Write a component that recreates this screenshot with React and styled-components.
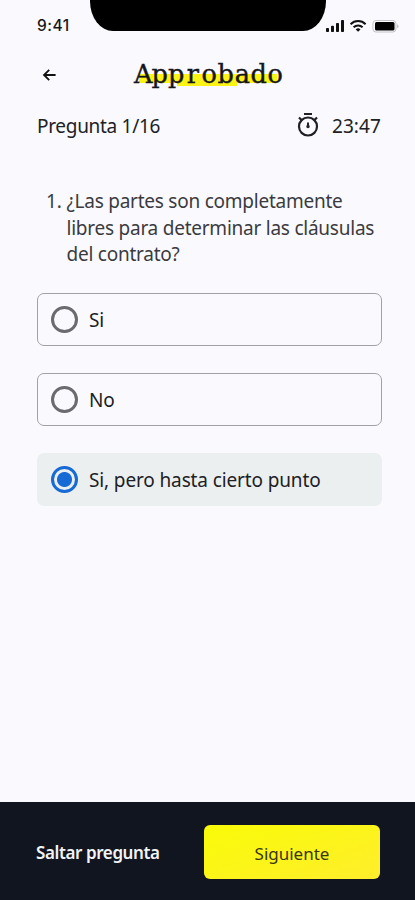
import React, { useState } from "react";
import styled, { createGlobalStyle } from "styled-components";

const GlobalStyle = createGlobalStyle`
  * {
    box-sizing: border-box;
  }

  body {
    margin: 0;
    background: #f9f9fe;
    font-family: "Noto Sans", "Open Sans", sans-serif;
    color: #202124;
  }

  button {
    border: 0;
    padding: 0;
    background: none;
    font: inherit;
    cursor: pointer;
  }
`;

const Screen = styled.div`
  display: flex;
  flex-direction: column;
  width: 100%;
  height: 100vh;
  min-height: 900px;
  background: #f9f9fe;
`;

const StatusBar = styled.div`
  display: grid;
  grid-template-columns: 90px 236px 1fr;
  height: 50px;
`;

const Clock = styled.div`
  padding: 17px 0 0 37px;
  font-family: Inter, sans-serif;
  font-size: 15.5px;
  font-weight: 500;
  line-height: 18px;
  letter-spacing: 0.5px;
  color: #17171b;
`;

const Notch = styled.div`
  height: 31px;
  background: #000;
  border-radius: 0 0 23px 23px / 0 0 30px 30px;
`;

const StatusIcons = styled.svg`
  width: 89px;
  height: 50px;
`;

const Header = styled.header`
  display: flex;
  align-items: center;
  height: 50px;
  padding-left: 42px;
`;

const BackButton = styled.button`
  width: 15px;
  height: 14px;
  margin-right: 78px;

  svg {
    display: block;
  }
`;

const Logo = styled.div`
  display: flex;
  padding-bottom: 3px;
  font-family: "DejaVu Serif", serif;
  font-size: 25.5px;
  line-height: 32px;
  color: #15151d;
  -webkit-text-stroke: 0.4px #15151d;
  background:
    linear-gradient(#fbf315, #fbf315) 42px 17px / 60px 11px no-repeat,
    linear-gradient(#fbf315, #fbf315) 4px 16px / 138px 9px no-repeat;
`;

// every letter takes the same width, like on a typewriter
const Letter = styled.span`
  display: flex;
  justify-content: center;
  width: 16.5px;
`;

const InfoRow = styled.div`
  display: flex;
  justify-content: space-between;
  align-items: center;
  height: 50px;
  padding: 2px 34px 0 37px;
`;

const Progress = styled.div`
  font-size: 19px;
  line-height: 26px;
  letter-spacing: -0.3px;
`;

const Timer = styled.div`
  display: flex;
  align-items: center;
  gap: 13px;
  font-size: 19px;
  line-height: 26px;
  letter-spacing: 0.1px;

  svg {
    margin-top: -3px;
  }
`;

const Question = styled.div`
  display: flex;
  gap: 5px;
  margin: 38px 0 25px;
  padding-left: 46px;
  font-size: 19px;
  line-height: 26.5px;
  letter-spacing: -0.24px;
  color: #3b3b3f;
`;

const Options = styled.div`
  display: flex;
  flex-direction: column;
  gap: 27px;
  padding: 0 33px 0 37px;
`;

const Option = styled.label`
  display: flex;
  align-items: center;
  gap: 11px;
  height: 53px;
  padding-left: ${({ $checked }) => ($checked ? "14px" : "13px")};
  border: ${({ $checked }) => ($checked ? "0" : "1px solid #a2a1a6")};
  border-radius: 7px;
  background: ${({ $checked }) => ($checked ? "#eceff0" : "transparent")};
  font-size: 19px;
  line-height: 26px;
  letter-spacing: -0.13px;
  cursor: pointer;
`;

const OptionText = styled.span`
  padding-top: 2px;
`;

const Radio = styled.input`
  appearance: none;
  flex: none;
  width: 27px;
  height: 27px;
  margin: 0;
  border: 3px solid #6b6a6d;
  border-radius: 50%;

  &:checked {
    border-color: #1769d6;
    background: radial-gradient(circle, #1769d6 7px, transparent 8px);
  }
`;

const Footer = styled.footer`
  display: flex;
  align-items: center;
  justify-content: space-between;
  height: 98px;
  margin-top: auto;
  padding: 2px 35px 0 36px;
  background: #111520;
`;

const SkipButton = styled.button`
  padding-top: 1px;
  font-size: 17px;
  font-weight: 600;
  line-height: 24px;
  letter-spacing: -0.4px;
  color: #f2f3f5;
`;

const NextButton = styled.button`
  width: 176px;
  height: 54px;
  padding-top: 2px;
  border-radius: 6px;
  background: linear-gradient(160deg, #f9fb08, #ffee2c);
  font-size: 17px;
  color: #38360f;
`;

const answers = ["Si", "No", "Si, pero hasta cierto punto"];

const App = () => {
  const [selected, setSelected] = useState(2);

  return (
    <>
      <GlobalStyle />
      <Screen>
        <StatusBar>
          <Clock>9:41</Clock>
          <Notch />
          <StatusIcons viewBox="326 0 89 50">
            <g fill="#111">
              <rect x="326" y="28" width="3" height="4" rx="0.8" />
              <rect x="331" y="25.7" width="3" height="6.3" rx="0.8" />
              <rect x="336" y="23" width="3" height="9" rx="0.8" />
              <rect x="341" y="20" width="3" height="12" rx="0.8" />
            </g>
            <g fill="none" stroke="#111" strokeWidth="2">
              <path d="M350.6 24.2a10.6 10.6 0 0 1 15 0" />
              <path d="M353.6 27.3a6.4 6.4 0 0 1 9 0" />
            </g>
            <path d="M355.7 29.4a3.5 3.5 0 0 1 4.8 0l-2.4 2.4z" fill="#111" />
            <rect x="372.9" y="20.5" width="23" height="11.5" rx="3" fill="none" stroke="#c4c4c8" />
            <rect x="375" y="22" width="19.5" height="8.5" rx="1.5" fill="#000" />
            <path d="M397.4 24.2v4c1.4-.5 1.4-3.5 0-4z" fill="#aaa" />
          </StatusIcons>
        </StatusBar>

        <Header>
          <BackButton aria-label="Volver">
            <svg width="15" height="14" viewBox="0 0 15 14" fill="none" stroke="#111" strokeWidth="1.8">
              <path d="M13.6 7H2M7.2 1.8 2 7l5.2 5.2" />
            </svg>
          </BackButton>
          <Logo>
            {"Approbado".split("").map((char, i) => (
              <Letter key={i}>{char}</Letter>
            ))}
          </Logo>
        </Header>

        <InfoRow>
          <Progress>Pregunta 1/16</Progress>
          <Timer>
            <svg width="22" height="26" viewBox="0 0 22 26" fill="none" stroke="#202124" strokeWidth="2.2">
              <circle cx="11" cy="14.5" r="9" />
              <path d="M7 2h8M2 5.5l3 3M20 5.5l-3 3" />
              <path d="M11 10.5v4" strokeWidth="2" />
              <circle cx="11" cy="14.5" r="1" strokeWidth="1.5" />
            </svg>
            23:47
          </Timer>
        </InfoRow>

        <Question>
          <span>1.</span>
          <div>
            ¿Las partes son completamente
            <br />
            libres para determinar las cláusulas
            <br />
            del contrato?
          </div>
        </Question>

        <Options>
          {answers.map((answer, i) => (
            <Option key={answer} $checked={selected === i}>
              <Radio
                type="radio"
                name="answer"
                checked={selected === i}
                onChange={() => setSelected(i)}
              />
              <OptionText>{answer}</OptionText>
            </Option>
          ))}
        </Options>

        <Footer>
          <SkipButton>Saltar pregunta</SkipButton>
          <NextButton>Siguiente</NextButton>
        </Footer>
      </Screen>
    </>
  );
};

export default App;
